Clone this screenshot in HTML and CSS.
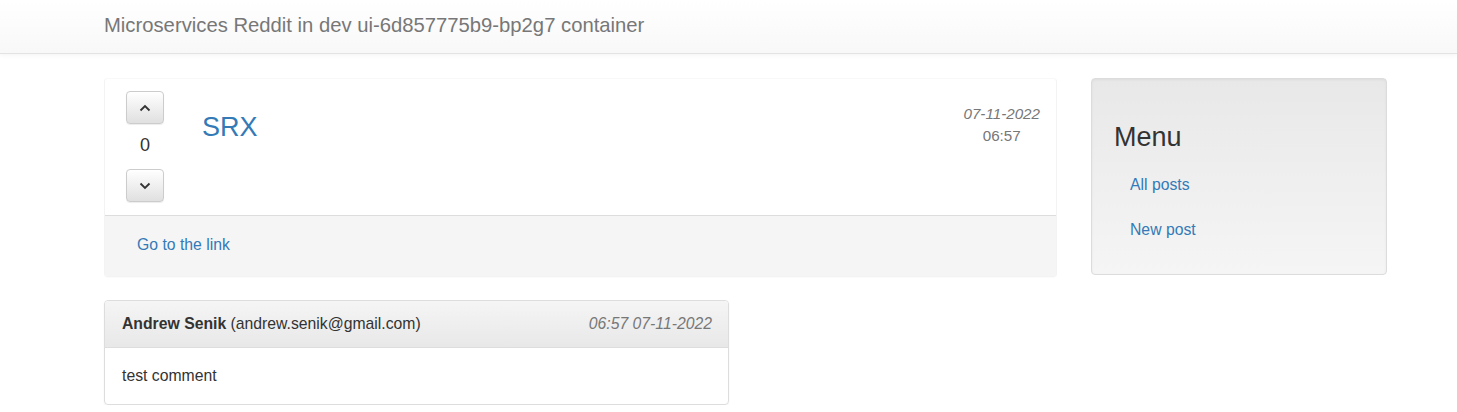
FILE: index.html
```html
<!DOCTYPE html>
<html>
<head>
<meta charset="utf-8">
<title>Microservices Reddit</title>
<link rel="stylesheet" href="styles.css">
</head>
<body>
<nav class="navbar">
  <a class="brand" href="#">Microservices Reddit in dev ui-6d857775b9-bp2g7 container</a>
</nav>
<div class="page">
  <main class="content">
    <section class="post">
      <div class="post-top">
        <div class="votes">
          <button class="vote-btn" aria-label="upvote">
            <svg width="12" height="8" viewBox="0 0 12 8"><path d="M1.5 6.5 L6 2 L10.5 6.5" fill="none" stroke="#333" stroke-width="1.8"/></svg>
          </button>
          <div class="score">0</div>
          <button class="vote-btn" aria-label="downvote">
            <svg width="12" height="8" viewBox="0 0 12 8"><path d="M1.5 1.5 L6 6 L10.5 1.5" fill="none" stroke="#333" stroke-width="1.8"/></svg>
          </button>
        </div>
        <h2 class="post-title"><a href="#">SRX</a></h2>
        <div class="post-date">
          <div class="date-day">07-11-2022</div>
          <div class="date-time">06:57</div>
        </div>
      </div>
      <div class="post-footer">
        <a href="#">Go to the link</a>
      </div>
    </section>
    <section class="comment">
      <div class="comment-head">
        <span class="author"><b>Andrew Senik</b> (andrew.senik@gmail.com)</span>
        <span class="comment-date">06:57 07-11-2022</span>
      </div>
      <div class="comment-body">test comment</div>
    </section>
  </main>
  <aside class="sidebar">
    <h2 class="menu-title">Menu</h2>
    <ul class="menu">
      <li><a href="#">All posts</a></li>
      <li><a href="#">New post</a></li>
    </ul>
  </aside>
</div>
</body>
</html>
```
FILE: styles.css
```css
* { box-sizing: border-box; }
body {
  margin: 0;
  font-family: "Liberation Sans", Arial, sans-serif;
  font-size: 15.75px;
  line-height: 1.42857;
  color: #333;
  background: #fff;
}
a { color: #337ab7; text-decoration: none; }

.navbar {
  height: 54px;
  background: linear-gradient(to bottom, #ffffff 0%, #f8f8f8 100%);
  border-bottom: 1px solid #e3e3e3;
  box-shadow: 0 1px 5px rgba(0,0,0,0.05);
  padding-left: 104px;
}
.brand {
  display: inline-block;
  font-size: 20.25px;
  line-height: 51px;
  color: #777;
}

.page {
  display: flex;
  align-items: flex-start;
  gap: 34px;
  padding: 24px 0 0 104px;
}
.content { width: 953px; }

.post {
  border: 1px solid #f3f3f3;
  border-top-color: #f8f8f8;
  border-radius: 4px;
  box-shadow: 0 1px 1px rgba(0,0,0,0.02);
}
.post-top {
  display: flex;
  align-items: flex-start;
  height: 136px;
  padding: 12px 16px 0 21px;
}
.votes {
  display: flex;
  flex-direction: column;
  align-items: center;
  width: 38px;
}
.vote-btn {
  width: 38px;
  height: 33px;
  border: 1px solid #ccc;
  border-radius: 4px;
  background: linear-gradient(to bottom, #ffffff 0%, #e0e0e0 100%);
  box-shadow: inset 0 1px 0 rgba(255,255,255,0.15), 0 1px 1px rgba(0,0,0,0.075);
  display: flex;
  align-items: center;
  justify-content: center;
  padding: 0;
}
.score {
  height: 45px;
  line-height: 42px;
  font-size: 18px;
  color: #333;
}
.post-title {
  margin: 20px 0 0 38px;
  font-size: 27px;
  font-weight: 400;
  line-height: 33px;
  flex: 1;
}
.post-date {
  margin-top: 12px;
  text-align: center;
  color: #777;
  font-size: 15.2px;
  line-height: 22px;
}
.date-day { font-style: italic; }

.post-footer {
  background: #f5f5f5;
  border-top: 1px solid #ddd;
  height: 61px;
  padding: 18px 32px;
  border-radius: 0 0 3px 3px;
}

.comment {
  width: 625px;
  margin-top: 23px;
  border: 1px solid #ddd;
  border-radius: 4px;
  box-shadow: 0 1px 2px rgba(0,0,0,0.05);
}
.comment-head {
  display: flex;
  justify-content: space-between;
  align-items: center;
  height: 47px;
  padding: 0 16px 0 17px;
  background: linear-gradient(to bottom, #f5f5f5 0%, #e8e8e8 100%);
  border-bottom: 1px solid #ddd;
  border-radius: 3px 3px 0 0;
}
.comment-date { font-style: italic; color: #777; }
.comment-body {
  height: 56px;
  padding: 17px 17px;
}

.sidebar {
  width: 296px;
  height: 197px;
  padding: 20px 22px;
  border: 1px solid #dcdcdc;
  border-radius: 4px;
  background: linear-gradient(to bottom, #e8e8e8 0%, #f5f5f5 100%);
  box-shadow: inset 0 1px 3px rgba(0,0,0,0.05), 0 1px 0 rgba(255,255,255,0.1);
}
.menu-title {
  margin: 22px 0 0 0;
  font-size: 27px;
  font-weight: 400;
  line-height: 33px;
  color: #333;
}
.menu {
  list-style: none;
  margin: 9px 0 0 0;
  padding: 0;
}
.menu li a {
  display: block;
  padding: 12px 16px;
  line-height: 20px;
}
.menu li + li { margin-top: 1px; }
```
